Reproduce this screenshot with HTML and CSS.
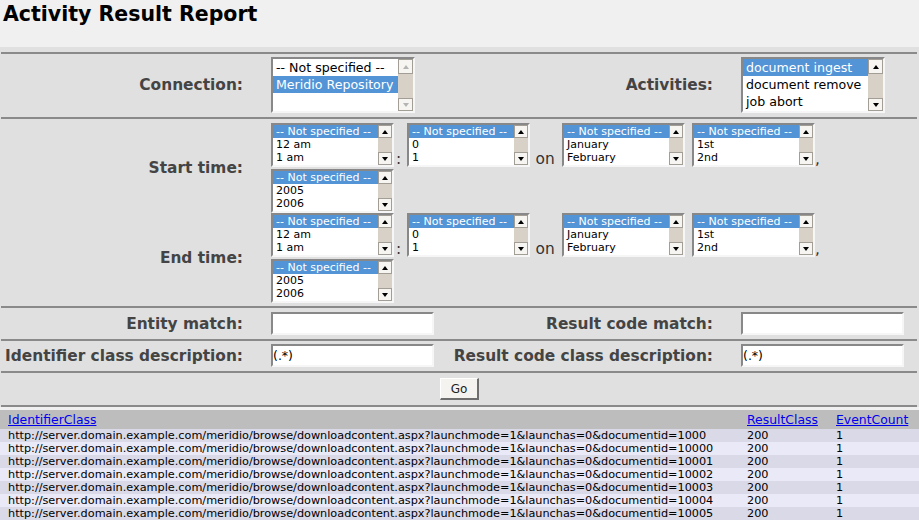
FILE: index.html
```html
<!DOCTYPE html>
<html>
<head>
<meta charset="utf-8">
<title>Activity Result Report</title>
<link rel="stylesheet" href="styles.css">
</head>
<body>
<h1 class="title">Activity Result Report</h1>
<form class="report">
  <div class="sep"></div>
  <div class="row r-conn">
    <div class="lbl">Connection:</div>
    <div class="val">
      <div class="lb lb-lg dis">
        <div class="opts">
          <div class="opt">-- Not specified --</div>
          <div class="opt sel">Meridio Repository</div>
        </div>
        <div class="sb"><div class="sbtn up"></div><div class="thumb"></div><div class="sbtn down"></div></div>
      </div>
    </div>
    <div class="lbl">Activities:</div>
    <div class="val">
      <div class="lb lb-lg">
        <div class="opts">
          <div class="opt sel">document ingest</div>
          <div class="opt">document remove</div>
          <div class="opt">job abort</div>
        </div>
        <div class="sb"><div class="sbtn up"></div><div class="thumb"></div><div class="sbtn down"></div></div>
      </div>
    </div>
  </div>
  <div class="sep"></div>
  <div class="row r-time r-start">
    <div class="lbl">Start time:</div>
    <div class="val span3 tflow">
      <div class="lb lb-sm"><div class="opts"><div class="opt sel">-- Not specified --</div><div class="opt">12 am</div><div class="opt">1 am</div></div><div class="sb"><div class="sbtn up"></div><div class="thumb"></div><div class="sbtn down"></div></div></div>
      <span class="tsep colon">:</span>
      <div class="lb lb-sm"><div class="opts"><div class="opt sel">-- Not specified --</div><div class="opt">0</div><div class="opt">1</div></div><div class="sb"><div class="sbtn up"></div><div class="thumb"></div><div class="sbtn down"></div></div></div>
      <span class="tsep on">on</span>
      <div class="lb lb-sm"><div class="opts"><div class="opt sel">-- Not specified --</div><div class="opt">January</div><div class="opt">February</div></div><div class="sb"><div class="sbtn up"></div><div class="thumb"></div><div class="sbtn down"></div></div></div>
      <div class="lb lb-sm gapl"><div class="opts"><div class="opt sel">-- Not specified --</div><div class="opt">1st</div><div class="opt">2nd</div></div><div class="sb"><div class="sbtn up"></div><div class="thumb"></div><div class="sbtn down"></div></div></div>
      <span class="tsep comma">,</span>
      <div class="lb lb-sm"><div class="opts"><div class="opt sel">-- Not specified --</div><div class="opt">2005</div><div class="opt">2006</div></div><div class="sb"><div class="sbtn up"></div><div class="thumb"></div><div class="sbtn down"></div></div></div>
    </div>
  </div>
  <div class="row r-time r-end">
    <div class="lbl">End time:</div>
    <div class="val span3 tflow">
      <div class="lb lb-sm"><div class="opts"><div class="opt sel">-- Not specified --</div><div class="opt">12 am</div><div class="opt">1 am</div></div><div class="sb"><div class="sbtn up"></div><div class="thumb"></div><div class="sbtn down"></div></div></div>
      <span class="tsep colon">:</span>
      <div class="lb lb-sm"><div class="opts"><div class="opt sel">-- Not specified --</div><div class="opt">0</div><div class="opt">1</div></div><div class="sb"><div class="sbtn up"></div><div class="thumb"></div><div class="sbtn down"></div></div></div>
      <span class="tsep on">on</span>
      <div class="lb lb-sm"><div class="opts"><div class="opt sel">-- Not specified --</div><div class="opt">January</div><div class="opt">February</div></div><div class="sb"><div class="sbtn up"></div><div class="thumb"></div><div class="sbtn down"></div></div></div>
      <div class="lb lb-sm gapl"><div class="opts"><div class="opt sel">-- Not specified --</div><div class="opt">1st</div><div class="opt">2nd</div></div><div class="sb"><div class="sbtn up"></div><div class="thumb"></div><div class="sbtn down"></div></div></div>
      <span class="tsep comma">,</span>
      <div class="lb lb-sm"><div class="opts"><div class="opt sel">-- Not specified --</div><div class="opt">2005</div><div class="opt">2006</div></div><div class="sb"><div class="sbtn up"></div><div class="thumb"></div><div class="sbtn down"></div></div></div>
    </div>
  </div>
  <div class="sep"></div>
  <div class="row r-text">
    <div class="lbl">Entity match:</div>
    <div class="val"><input class="txt" type="text" value=""></div>
    <div class="lbl">Result code match:</div>
    <div class="val"><input class="txt" type="text" value=""></div>
  </div>
  <div class="sep"></div>
  <div class="row r-text2">
    <div class="lbl">Identifier class description:</div>
    <div class="val"><input class="txt" type="text" value="(.*)"></div>
    <div class="lbl">Result code class description:</div>
    <div class="val"><input class="txt" type="text" value="(.*)"></div>
  </div>
  <div class="sep"></div>
  <div class="r-go"><button class="go" type="button">Go</button></div>
  <div class="sep"></div>
</form>
<table class="results">
  <colgroup><col class="c1"><col class="c2"><col class="c3"></colgroup>
  <thead>
    <tr class="hdr"><th class="k1"><a href="#">IdentifierClass</a></th><th class="k2"><a href="#">ResultClass</a></th><th class="k3"><a href="#">EventCount</a></th></tr>
  </thead>
  <tbody>
    <tr class="odd"><td class="k1">http://server.domain.example.com/meridio/browse/downloadcontent.aspx?launchmode=1&amp;launchas=0&amp;documentid=1000</td><td class="k2">200</td><td class="k3">1</td></tr>
    <tr class="even"><td class="k1">http://server.domain.example.com/meridio/browse/downloadcontent.aspx?launchmode=1&amp;launchas=0&amp;documentid=10000</td><td class="k2">200</td><td class="k3">1</td></tr>
    <tr class="odd"><td class="k1">http://server.domain.example.com/meridio/browse/downloadcontent.aspx?launchmode=1&amp;launchas=0&amp;documentid=10001</td><td class="k2">200</td><td class="k3">1</td></tr>
    <tr class="even"><td class="k1">http://server.domain.example.com/meridio/browse/downloadcontent.aspx?launchmode=1&amp;launchas=0&amp;documentid=10002</td><td class="k2">200</td><td class="k3">1</td></tr>
    <tr class="odd"><td class="k1">http://server.domain.example.com/meridio/browse/downloadcontent.aspx?launchmode=1&amp;launchas=0&amp;documentid=10003</td><td class="k2">200</td><td class="k3">1</td></tr>
    <tr class="even"><td class="k1">http://server.domain.example.com/meridio/browse/downloadcontent.aspx?launchmode=1&amp;launchas=0&amp;documentid=10004</td><td class="k2">200</td><td class="k3">1</td></tr>
    <tr class="odd"><td class="k1">http://server.domain.example.com/meridio/browse/downloadcontent.aspx?launchmode=1&amp;launchas=0&amp;documentid=10005</td><td class="k2">200</td><td class="k3">1</td></tr>
  </tbody>
</table>
</body>
</html>
```

FILE: styles.css
```css
* { box-sizing: border-box; }
html, body { margin: 0; padding: 0; }
body {
  background: #f0f0f0;
  font-family: "DejaVu Sans", "Liberation Sans", sans-serif;
  color: #000;
  width: 919px;
  overflow: hidden;
}

.title {
  margin: 0;
  height: 47px;
  padding: 2px 0 0 3px;
  font-size: 20.5px;
  line-height: 24px;
  font-weight: bold;
  color: #000;
}

.report {
  margin: 0;
  background: #e0e0e0;
  padding-top: 5px;
}
.sep {
  height: 2px;
  margin: 0 2px 0 1px;
  background: #8a8a8a;
}

.row {
  display: grid;
  grid-template-columns: 257px 189px 281px 1fr;
  align-items: center;
}
.lbl {
  text-align: right;
  padding-right: 14px;
  font-weight: bold;
  font-size: 15.4px;
  color: #444;
  white-space: nowrap;
}
.val { padding-left: 14px; }
.span3 { grid-column: 2 / 5; }

.r-conn { padding: 3px 0 4px; }
.r-start { padding: 4px 0 0; }
.r-end { padding: 0 0 3px; }
.r-text { padding: 4px 0 4px; }
.r-text2 { padding: 3px 0 4px; }
.r-go {
  display: flex;
  justify-content: center;
  padding: 5px 0;
}

/* list boxes */
.lb {
  display: flex;
  background: #fff;
  border-style: solid;
  border-width: 2px;
  border-color: #888 #f6f6f6 #f6f6f6 #888;
  overflow: hidden;
  flex: none;
}
.lb-lg { width: 144px; height: 56px; }
.lb-sm { width: 123px; height: 44px; }
.opts { flex: 1; min-width: 0; }
.opt {
  white-space: nowrap;
  overflow: hidden;
  padding-left: 3px;
  color: #000;
}
.lb-lg .opt { font-size: 12.6px; line-height: 17px; }
.lb-sm .opt { font-size: 11px; line-height: 13px; }
.opt.sel { background: #5294d6; color: #fff; }

.sb {
  display: flex;
  flex-direction: column;
  background: #d8d1c7;
  flex: none;
}
.lb-lg .sb { width: 15px; }
.lb-sm .sb { width: 14px; }
.sbtn {
  flex: none;
  background: #f6f5f1;
  border: 1px solid #a39e95;
  display: flex;
  align-items: center;
  justify-content: center;
}
.lb-lg .sbtn { height: 15px; }
.lb-lg .sbtn.down { height: 13px; }
.lb-sm .sbtn { height: 13px; }
.thumb { flex: 1; }
.sbtn::before {
  content: "";
  width: 0;
  height: 0;
  border-left: 3.5px solid transparent;
  border-right: 3.5px solid transparent;
}
.up::before { border-bottom: 4px solid #000; }
.down::before { border-top: 4px solid #000; }
.dis .up::before { border-bottom-color: #b4b4b4; }
.dis .down::before { border-top-color: #b4b4b4; }

/* time rows */
.tflow {
  display: flex;
  flex-wrap: wrap;
  align-items: flex-end;
  row-gap: 2px;
}
.tsep {
  flex: none;
  font-size: 15.4px;
  line-height: 15px;
  color: #333;
  white-space: nowrap;
}
.colon { width: 13px; padding-left: 2px; }
.on { width: 32px; padding-left: 5.5px; }
.comma { width: 6px; padding-left: 0; }
.gapl { margin-left: 7px; }

/* text inputs */
.txt {
  display: block;
  width: 163px;
  height: 23px;
  margin: 0;
  padding: 0;
  border-style: solid;
  border-width: 2px;
  border-color: #888 #f6f6f6 #f6f6f6 #888;
  background: #fff;
  font-family: "DejaVu Sans", sans-serif;
  font-size: 12.5px;
  color: #000;
  outline: none;
}

.go {
  width: 39px;
  height: 22px;
  margin: 0;
  padding: 0;
  font-family: "DejaVu Sans", sans-serif;
  font-size: 12px;
  color: #222;
  background: #f4f3ef;
  border-style: solid;
  border-width: 1px 2px 2px 1px;
  border-color: #fff #6e6e6e #6e6e6e #fff;
}

/* results */
.results {
  margin-top: 3px;
  width: 919px;
  border-collapse: collapse;
  border-spacing: 0;
  table-layout: fixed;
}
.c1 { width: 745px; }
.c2 { width: 89px; }
.c3 { width: 85px; }
.results th, .results td {
  padding: 0;
  text-align: left;
  white-space: nowrap;
  overflow: hidden;
}
.results th {
  font-weight: normal;
  font-size: 12.4px;
  line-height: 19px;
  background: #bdbdbd;
}
.results td {
  font-size: 11.25px;
  line-height: 13px;
  color: #000;
}
.results a { color: #0000ee; text-decoration: underline; }
.k1 { padding-left: 8px !important; }
.k2, .k3 { padding-left: 2px !important; }
.odd td { background: #d9d9e8; }
.even td { background: #e9e9f7; }
```
